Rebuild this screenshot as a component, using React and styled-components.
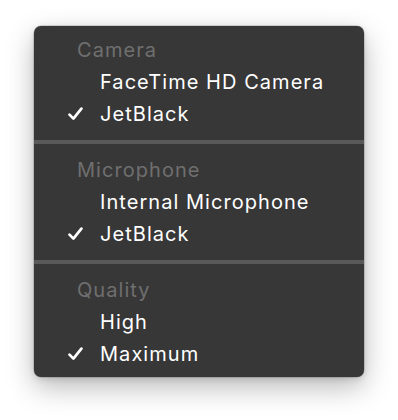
import React from "react";
import styled, { createGlobalStyle } from "styled-components";

const GlobalStyle = createGlobalStyle`
  html, body {
    margin: 0;
    padding: 0;
    background: #ffffff;
  }
  body {
    font-family: Inter, "Noto Sans", "DejaVu Sans", sans-serif;
  }
`;

const Page = styled.div`
  width: 398px;
  height: 420px;
  padding: 26px 0 0 34px;
  box-sizing: border-box;
`;

const Menu = styled.div`
  width: 330px;
  box-sizing: border-box;
  padding: 8px 0 7px;
  background: #373737;
  border-radius: 7px;
  box-shadow: 0 0 0 0.5px rgba(0, 0, 0, 0.25), 0 10px 28px rgba(0, 0, 0, 0.28),
    0 2px 6px rgba(0, 0, 0, 0.12);
`;

const Section = styled.div`
  display: flex;
  flex-direction: column;
`;

const Separator = styled.div`
  height: 4px;
  background: #595959;
  margin: 10px 0;
`;

const Row = styled.div`
  height: 32px;
  display: flex;
  align-items: center;
  font-size: 20px;
  letter-spacing: 1.05px;
  color: ${(p) => (p.header ? "#6f6f6f" : "#ffffff")};
  padding-left: ${(p) => (p.header ? "43px" : "66px")};
  position: relative;
`;

const Check = styled.svg`
  position: absolute;
  left: 34px;
  top: 9px;
  width: 15px;
  height: 14px;
`;

const CheckMark = () => (
  <Check viewBox="0 0 15 14">
    <path
      d="M1.5 7.6 L5.4 11.6 L13.4 1.6"
      fill="none"
      stroke="#ffffff"
      strokeWidth="2.7"
      strokeLinecap="round"
      strokeLinejoin="round"
    />
  </Check>
);

const sections = [
  { title: "Camera", items: ["FaceTime HD Camera", "JetBlack"], checked: 1 },
  { title: "Microphone", items: ["Internal Microphone", "JetBlack"], checked: 1 },
  { title: "Quality", items: ["High", "Maximum"], checked: 1 },
];

export default function App() {
  return (
    <>
      <GlobalStyle />
      <Page>
        <Menu>
          {sections.map((s, i) => (
            <React.Fragment key={s.title}>
              {i > 0 && <Separator />}
              <Section>
                <Row header>{s.title}</Row>
                {s.items.map((item, j) => (
                  <Row key={item}>
                    {j === s.checked && <CheckMark />}
                    {item}
                  </Row>
                ))}
              </Section>
            </React.Fragment>
          ))}
        </Menu>
      </Page>
    </>
  );
}
